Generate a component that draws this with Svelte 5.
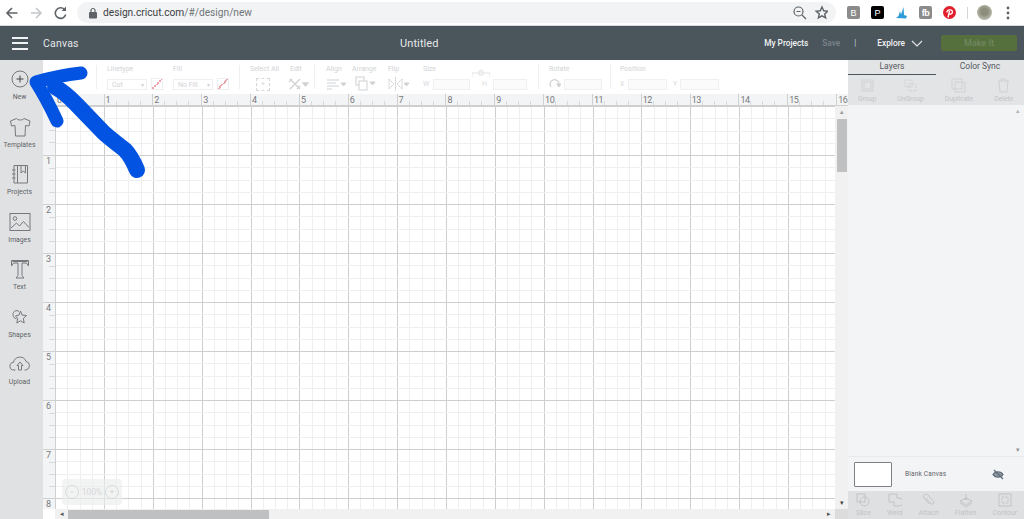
<script>
  const tools = [
    { label: "New", icon: "new" },
    { label: "Templates", icon: "shirt" },
    { label: "Projects", icon: "book" },
    { label: "Images", icon: "image" },
    { label: "Text", icon: "text" },
    { label: "Shapes", icon: "shapes" },
    { label: "Upload", icon: "upload" },
  ];
  const inches = Array.from({ length: 16 }, (_, i) => i + 1);
  const rows = [1, 2, 3, 4, 5, 6, 7, 8];
  const topActions = ["Group", "UnGroup", "Duplicate", "Delete"];
  const bottomActions = ["Slice", "Weld", "Attach", "Flatten", "Contour"];

  // quarter inch lines, every fourth one is the darker inch line
  const gridW = 779;
  const gridH = 403;
  const stepX = 48.85 / 4;
  const stepY = 49 / 4;
  const xLines = Array.from({ length: 64 }, (_, i) => ({
    at: Math.round(i * stepX + 48 - 4 * stepX) + 0.5,
    major: i % 4 === 0,
  }));
  const yLines = Array.from({ length: 33 }, (_, i) => ({
    at: Math.round(i * stepY) + 0.5,
    major: i % 4 === 0,
  }));
  const byDrawOrder = (a, b) => Number(a.major) - Number(b.major);
  xLines.sort(byDrawOrder);
  yLines.sort(byDrawOrder);
</script>

<div class="page">
  <div class="chrome">
    <svg class="nav" width="74" height="24" viewBox="0 0 74 24" fill="none" stroke-width="1.6">
      <path d="M17.500 12H7.500M12 7l-5 5 5 5" stroke="#5f6368" />
      <path d="M31 12h10M36 7l5 5-5 5" stroke="#c4c7c9" />
      <path d="M64.500 8.500a5.300 5.300 0 1 0 1.200 5" stroke="#5f6368" />
      <path d="M66 5.500v4.500h-4.500z" fill="#5f6368" />
    </svg>
    <div class="omnibox">
      <svg width="10" height="12" viewBox="0 0 10 12">
        <rect x="1" y="5" width="8" height="6.500" rx="1" fill="#5f6368" />
        <path d="M3 5V3.500a2 2 0 0 1 4 0V5" fill="none" stroke="#5f6368" stroke-width="1.200" />
      </svg>
      <span class="url"><b>design.cricut.com</b>/#/design/new</span>
      <svg class="omni-icons" width="36" height="16" viewBox="0 0 36 16" fill="none" stroke="#5f6368" stroke-width="1.200">
        <circle cx="6.500" cy="6.500" r="4.500" />
        <path d="M10 10l4 4M4.500 6.500h4" />
        <path d="M30 2l1.700 3.800 4.100.4-3.100 2.700.9 4-3.600-2.100-3.600 2.100.9-4-3.100-2.700 4.100-.4z" stroke-width="1.400" />
      </svg>
    </div>
    <div class="extensions">
      <span class="ext grey">B</span>
      <span class="ext black">P</span>
      <svg width="13" height="13" viewBox="0 0 13 13"><path d="M1 12l2.500-2 1.500-5 1 3.500L8.500 1l.5 8 3 1-1 2.500z" fill="#2e9bd8" /></svg>
      <span class="ext grey small">fb</span>
      <svg class="pin" width="13" height="13" viewBox="0 0 13 13">
        <circle cx="6.500" cy="6.500" r="6.500" fill="#e0202d" />
        <path d="M5 11.500l1.500-6.500M4 6.500C3.500 3.500 9 2.800 9.400 5.500 9.600 8 7 9 6 7.500" fill="none" stroke="#fff" stroke-width="1.300" />
      </svg>
      <span class="divider"></span>
      <span class="avatar"></span>
      <svg class="dots" width="4" height="14" viewBox="0 0 4 14" fill="#5f6368">
        <circle cx="2" cy="2" r="1.400" /><circle cx="2" cy="7" r="1.400" /><circle cx="2" cy="12" r="1.400" />
      </svg>
    </div>
  </div>

  <header class="topbar">
    <div class="burger"><i></i><i></i><i></i></div>
    <span class="section">Canvas</span>
    <span class="title">Untitled</span>
    <div class="top-right">
      <span class="projects">My Projects</span>
      <span class="save">Save</span>
      <span class="sep">|</span>
      <span class="explore">Explore</span>
      <svg width="12" height="7" viewBox="0 0 12 7" fill="none" stroke="#e6e8ea" stroke-width="1.100"><path d="M1 1l5 5 5-5" /></svg>
      <span class="make">Make It</span>
    </div>
  </header>

  <div class="workspace">
    <nav class="sidebar">
      {#each tools as t}
        <div class="tool">
          <svg width="24" height="24" viewBox="0 0 24 24" fill="none" stroke="#75797d" stroke-width="1">
            {#if t.icon === "new"}
              <circle cx="12" cy="12" r="8" />
              <path d="M12 8.500v7M8.500 12h7" stroke="#3f4448" />
            {:else if t.icon === "shirt"}
              <path d="M8.500 3.500L2.500 6l1 5 3.500-.5.500 10.500h9.500l.5-10.500 3.500.5 1-5-6-2.500c-1.500 2-6 2-7.500 0z" />
            {:else if t.icon === "book"}
              <path d="M6 3.500h13.500V21H6zM9.500 3.500V21M13 3.500V11l2.200-2 2.200 2V3.500" />
              <path d="M4 8h3.500M4 12h3.500M4 16h3.500" />
            {:else if t.icon === "image"}
              <rect x="2" y="3.500" width="20" height="17" />
              <circle cx="7" cy="8.500" r="1.800" />
              <path d="M3 18l5.500-5 3 3 4-4.500 5.500 6" />
            {:else if t.icon === "text"}
              <path d="M3.500 3.500h17v5.500l-2-3h-4.500v12.500l2 2.500H8l2-2.500V6H5.500l-2 3z" />
              <path d="M4.500 4.500h15" />
            {:else if t.icon === "shapes"}
              <path d="M11 6.500C8.500 4.500 5 6 5 9.500c0 2.500 1.600 4 3.500 4.300" />
              <path d="M12.500 6l1.500 4 4.500.5-3.200 3 .9 4.500-3.700-2.200-3.700 2.200.9-4.500-2.200-2.500 3.500-1z" />
            {:else}
              <path d="M7.500 18H6a3.800 3.800 0 0 1-.5-7.600 6.500 6.500 0 0 1 12.500-1 4.400 4.400 0 0 1 0 8.600h-1.500" />
              <path d="M9 13.500l3-3.500 3 3.500h-1.500V18h-3v-4.500z" />
            {/if}
          </svg>
          <span>{t.label}</span>
        </div>
      {/each}
    </nav>

    <main class="center">
      <div class="toolbar">
        <div class="group g-line sep-left">
          <span class="cap">Linetype</span>
          <div class="line"><span class="select">Cut<em>▾</em></span><span class="swatch"></span></div>
        </div>
        <div class="group g-fill">
          <span class="cap">Fill</span>
          <div class="line"><span class="select">No Fill<em>▾</em></span><span class="swatch"></span></div>
        </div>
        <div class="group g-select sep-left">
          <span class="cap">Select All</span>
          <div class="line"><span class="dashed">+</span></div>
        </div>
        <div class="group g-edit">
          <span class="cap">Edit</span>
          <div class="line">
            <svg class="shift" width="22" height="14" viewBox="0 0 22 14" fill="none" stroke="#cfd1d3" stroke-width="1.300"><path d="M2 2l10 10M12 2L2 12M1 5l3-3M9 12l3-3" /><path d="M15 6h5l-2.500 3z" fill="#cfd1d3" /></svg>
          </div>
        </div>
        <div class="group g-align sep-left">
          <span class="cap">Align</span>
          <div class="line"><svg width="22" height="14" viewBox="0 0 22 14" fill="none" stroke="#cfd1d3"><path d="M1 3h12M1 6h9M1 9h12M1 12h5" /><path d="M15 6h5l-2.500 3z" fill="#cfd1d3" /></svg></div>
        </div>
        <div class="group g-arrange">
          <span class="cap">Arrange</span>
          <div class="line"><svg class="shift-r" width="22" height="16" viewBox="0 0 22 16" fill="none" stroke="#cfd1d3"><rect x="1" y="1" width="8" height="8" /><rect x="4" y="5" width="8" height="9" fill="#fff" /><path d="M15 6h5l-2.500 3z" fill="#cfd1d3" /></svg></div>
        </div>
        <div class="group g-flip">
          <span class="cap">Flip</span>
          <div class="line"><svg width="22" height="14" viewBox="0 0 22 14" fill="none" stroke="#cfd1d3"><path d="M1 2l5 5-5 5zM14 2L9 7l5 5zM7.500 0v14" stroke-dasharray="2 0.500" /><path d="M16 6h5l-2.500 3z" fill="#cfd1d3" /></svg></div>
        </div>
        <div class="group g-size">
          <span class="cap">Size</span>
          <div class="line">
            <span class="axis">W</span><span class="spin s-w"></span>
            <svg class="lock" width="18" height="10" viewBox="0 0 18 10" fill="none" stroke="#e2e3e5"><path d="M0 9V5h18v4M7 3h4v4H7zM8 3a1 1 0 0 1 2 0" /></svg>
            <span class="axis s-h">H</span><span class="spin s-h2"></span>
          </div>
        </div>
        <div class="group g-rotate sep-left">
          <span class="cap">Rotate</span>
          <div class="line">
            <svg width="12" height="14" viewBox="0 0 12 14" fill="none" stroke="#cfd1d3" stroke-width="1.200"><path d="M2 10a4.500 4.500 0 1 1 8-3" /><path d="M8 7h4l-2 2.500z" fill="#cfd1d3" /></svg>
            <span class="spin s-r"></span>
          </div>
        </div>
        <div class="group g-pos sep-left">
          <span class="cap">Position</span>
          <div class="line">
            <span class="axis s-x">X</span><span class="spin s-p"></span>
            <span class="axis s-y">Y</span><span class="spin s-p2"></span>
          </div>
        </div>
      </div>

      <div class="stage">
        <div class="ruler-top">
          <span class="corner">0</span>
          {#each inches as n}
            <span class="inch">{n}</span>
          {/each}
        </div>
        <div class="stage-body">
          <div class="ruler-left">
            <span class="vinch first"></span>
            {#each rows as n}
              <span class="vinch">{n}</span>
            {/each}
          </div>
          <svg class="grid" width={gridW} height={gridH} viewBox="0 0 {gridW} {gridH}" shape-rendering="crispEdges">
            {#each xLines as l}
              <line x1={l.at} x2={l.at} y1="0" y2={gridH} stroke={l.major ? "#cdced0" : "#eeeff0"} />
            {/each}
            {#each yLines as l}
              <line y1={l.at} y2={l.at} x1="0" x2={gridW} stroke={l.major ? "#cdced0" : "#eeeff0"} />
            {/each}
          </svg>
          <div class="vscroll">
            <span class="arrow">▴</span>
            <span class="vthumb"></span>
            <span class="arrow end">▾</span>
          </div>
        </div>
        <div class="hscroll">
          <span class="harrow">◂</span>
          <span class="hthumb"></span>
          <span class="harrow end">▸</span>
          <span class="hcorner"></span>
        </div>
        <div class="zoom">
          <span class="round">−</span>
          <span class="pct">100%</span>
          <span class="round">+</span>
        </div>
      </div>
    </main>

    <aside class="panel">
      <div class="tabs">
        <span class="tab active">Layers</span>
        <span class="tab">Color Sync</span>
      </div>
      <div class="actions">
        {#each topActions as a, i}
          <div class="action">
            <svg width="15" height="15" viewBox="0 0 15 15" fill="none" stroke="#cfd1d3">
              {#if i === 0}
                <rect x="2" y="2" width="11" height="11" /><rect x="4" y="4" width="7" height="7" />
              {:else if i === 1}
                <path d="M2 2h7v7H2zM6 6h7v7H6z" stroke-dasharray="2 1" />
              {:else if i === 2}
                <rect x="1" y="1" width="10" height="10" /><rect x="4" y="4" width="10" height="10" />
              {:else}
                <path d="M2 3h11M5 3V1h5v2M3 3l1 11h7l1-11" />
              {/if}
            </svg>
            <span>{a}</span>
          </div>
        {/each}
      </div>
      <div class="layers">
        <span class="arrow">▴</span>
        <span class="arrow end">▾</span>
      </div>
      <div class="blank">
        <span class="thumb"></span>
        <span class="blank-label">Blank Canvas</span>
        <svg width="12" height="11" viewBox="0 0 12 11" fill="none" stroke="#5f6b78" stroke-width="1.200">
          <path d="M1 5.500C3 2 9 2 11 5.500 9 9 3 9 1 5.500z" fill="#8f98a1" /><path d="M2 1l9 9" />
        </svg>
      </div>
      <div class="actions bottom">
        {#each bottomActions as a, i}
          <div class="action">
            <svg width="14" height="14" viewBox="0 0 14 14" fill="none" stroke="#c2c4c6">
              {#if i === 0}
                <rect x="1" y="1" width="8" height="8" /><circle cx="8.500" cy="8.500" r="4.500" />
              {:else if i === 1}
                <path d="M1 1h8v4h2a3 3 0 0 1 0 8H6V9H1z" />
              {:else if i === 2}
                <path d="M4 5l5 6a2 2 0 0 0 3-2L6 2a2.500 2.500 0 0 0-4 3l5 6" />
              {:else if i === 3}
                <path d="M7 1v6M5 5l2 2 2-2M1 8l6-3 6 3-6 4zM1 10l6 4 6-4" />
              {:else}
                <rect x="1" y="1" width="12" height="12" /><path d="M4 4h6v6H4z" stroke-dasharray="2 1" />
              {/if}
            </svg>
            <span>{a}</span>
          </div>
        {/each}
      </div>
    </aside>
  </div>

  <svg class="scribble" width="160" height="190" viewBox="0 0 160 190" fill="none" stroke="#0353e3" stroke-linecap="round" stroke-linejoin="round">
    <path d="M81 73C64 75 50 78 36 82C43 93 50 106 57 121" stroke-width="13" />
    <path d="M55 87C66 93 72 100 77 105L104 133C112 140 120 146 125 150C130 155 134 163 137 170" stroke-width="16" />
  </svg>
</div>

<style>
  :global(body) {
    margin: 0;
    background: #fff;
  }
  .page {
    position: relative;
    width: 1024px;
    height: 519px;
    overflow: hidden;
    font-family: Roboto, "Liberation Sans", sans-serif;
  }
  .chrome {
    height: 25px;
    display: flex;
    align-items: center;
    background: #fff;
    border-bottom: 1px solid #d8d9da;
  }
  .nav {
    flex: none;
  }
  .omnibox {
    width: 759px;
    height: 21px;
    margin-left: 3px;
    padding: 0 8px 0 11px;
    box-sizing: border-box;
    display: flex;
    align-items: center;
    gap: 5px;
    background: #f1f3f4;
    border-radius: 11px;
  }
  .url {
    font-size: 10.200px;
    color: #70757a;
  }
  .url b {
    font-weight: 400;
    color: #3c4043;
  }
  .omni-icons {
    margin-left: auto;
  }
  .extensions {
    flex: 1;
    display: flex;
    align-items: center;
    gap: 11px;
    padding-left: 11px;
  }
  .ext {
    width: 13px;
    height: 13px;
    border-radius: 2px;
    display: flex;
    align-items: center;
    justify-content: center;
    font-size: 9px;
    color: #fff;
    font-family: "Liberation Sans", sans-serif;
  }
  .ext.grey {
    background: #8b8b8b;
  }
  .ext.black {
    background: #000;
  }
  .ext.small {
    font-weight: 700;
    letter-spacing: -0.5px;
  }
  .divider {
    width: 1px;
    height: 12px;
    background: #d5d6d7;
  }
  .avatar {
    width: 15px;
    height: 15px;
    margin-left: -2px;
    border-radius: 50%;
    background: radial-gradient(circle at 50% 45%, #8d8d7c 0 30%, #b4b4a6 65%, #c9c9c0);
  }
  .dots {
    margin-left: 3px;
  }
  .topbar {
    height: 34px;
    position: relative;
    display: flex;
    align-items: center;
    background: #4b555c;
    color: #e6e8ea;
  }
  .burger {
    width: 16px;
    margin-left: 12px;
    display: flex;
    flex-direction: column;
    gap: 3.500px;
  }
  .burger i {
    height: 2px;
    background: #f1f2f3;
  }
  .section {
    margin-left: 15px;
    font-size: 10.500px;
    letter-spacing: 0.2px;
  }
  .title {
    position: absolute;
    left: 400px;
    font-size: 11px;
    letter-spacing: 0.1px;
  }
  .top-right {
    margin-left: auto;
    display: flex;
    align-items: center;
    font-size: 8.300px;
    font-weight: 500;
    padding-right: 7px;
  }
  .projects {
    color: #f2f3f4;
  }
  .save {
    margin-left: 14px;
    color: #7b858c;
  }
  .sep {
    margin-left: 14px;
    color: #b8c4d4;
  }
  .explore {
    margin-left: 21px;
    color: #f2f3f4;
  }
  .top-right svg {
    margin-left: 6px;
  }
  .make {
    margin-left: 18px;
    width: 76px;
    height: 16px;
    line-height: 16px;
    text-align: center;
    background: #556f3d;
    color: #71875f;
    font-size: 9px;
    border-radius: 2px;
  }
  .workspace {
    height: 459px;
    display: flex;
  }
  .sidebar {
    width: 43px;
    flex: none;
    background: #e0e1e3;
    padding: 7px 4px 0 0;
    box-sizing: border-box;
    display: flex;
    flex-direction: column;
    gap: 11.500px;
  }
  .tool {
    height: 36px;
    display: flex;
    flex-direction: column;
    align-items: center;
    gap: 2px;
    font-size: 6.800px;
    color: #5d6266;
  }
  .center {
    flex: 1;
    min-width: 0;
    display: flex;
    flex-direction: column;
  }
  .toolbar {
    height: 34px;
    padding-left: 53px;
    display: flex;
    align-items: flex-start;
    background: #fff;
    font-size: 7px;
    color: #d1d3d5;
    box-sizing: border-box;
    flex: none;
  }
  .group {
    margin-top: 5px;
    height: 24px;
    flex: none;
    box-sizing: border-box;
  }
  .sep-left {
    border-left: 1px solid #eeeff0;
    padding-left: 10px;
  }
  .cap {
    display: block;
    height: 9px;
    line-height: 9px;
  }
  .line {
    display: flex;
    align-items: center;
    margin-top: 3px;
    height: 14px;
    position: relative;
  }
  .g-line {
    width: 77px;
  }
  .g-fill {
    width: 66px;
  }
  .g-select {
    width: 51px;
  }
  .g-edit {
    width: 24px;
  }
  .g-align {
    width: 38px;
    padding-left: 11px;
  }
  .g-arrange {
    width: 36px;
  }
  .g-flip {
    width: 35px;
  }
  .g-size {
    width: 115px;
  }
  .g-rotate {
    width: 72px;
  }
  .g-pos {
    width: 120px;
    padding-left: 9px;
  }
  .shift {
    margin-left: -2px;
  }
  .shift-r {
    margin-left: 3px;
  }
  .select {
    width: 40px;
    height: 11px;
    padding-left: 4px;
    box-sizing: border-box;
    line-height: 10px;
    border: 1px solid #eeeff0;
    display: flex;
    justify-content: space-between;
    white-space: nowrap;
    overflow: hidden;
  }
  .select em {
    font-style: normal;
    font-size: 6px;
    padding-right: 2px;
  }
  .swatch {
    width: 12px;
    height: 12px;
    margin-left: 4px;
    background: linear-gradient(135deg, transparent 45%, #eda3a8 45%, #eda3a8 55%, transparent 55%);
    border: 1px solid #eeeff0;
    box-sizing: border-box;
  }
  .dashed {
    width: 12px;
    height: 11px;
    border: 1px dashed #d5d6d8;
    text-align: center;
    line-height: 10px;
    margin-left: 6px;
  }
  .axis {
    width: 10px;
    color: #d8d9db;
  }
  .spin {
    height: 11px;
    border: 1px solid #f0f0f1;
    box-sizing: border-box;
    background: #fbfbfb;
  }
  .s-w {
    width: 37px;
  }
  .s-h {
    margin-left: 12px;
    width: 11px;
  }
  .s-h2 {
    width: 34px;
  }
  .s-r {
    margin-left: 3px;
    width: 38px;
  }
  .s-x {
    width: 8px;
  }
  .s-p {
    width: 39px;
  }
  .s-y {
    margin-left: 6px;
    width: 7px;
  }
  .s-p2 {
    width: 39px;
  }
  .lock {
    position: absolute;
    left: 49px;
    top: -9px;
  }
  .stage {
    flex: 1;
    position: relative;
    display: flex;
    flex-direction: column;
    min-height: 0;
  }
  .ruler-top {
    height: 12px;
    flex: none;
    display: flex;
    overflow: hidden;
    background: #f3f4f5;
    font-size: 9px;
    line-height: 12px;
    color: #77797c;
    box-sizing: border-box;
    border-bottom: 1px solid #cfd0d2;
  }
  .corner {
    padding-left: 14px;
    flex: none;
    box-sizing: border-box;
    width: 60.500px;
  }
  .inch {
    width: 48.850px;
    flex: none;
    box-sizing: border-box;
    padding-left: 2px;
    letter-spacing: -0.5px;
    background:
      linear-gradient(#cfd0d2, #cfd0d2) 0 0 / 1px 100% no-repeat,
      linear-gradient(#d8d9db, #d8d9db) 12px 100% / 1px 4px no-repeat,
      linear-gradient(#d8d9db, #d8d9db) 24px 100% / 1px 4px no-repeat,
      linear-gradient(#d8d9db, #d8d9db) 36px 100% / 1px 4px no-repeat;
  }
  .inch:last-child {
    background: linear-gradient(#cfd0d2, #cfd0d2) 0 0 / 1px 100% no-repeat;
  }
  .stage-body {
    flex: 1;
    min-height: 0;
    display: flex;
    overflow: hidden;
  }
  .ruler-left {
    width: 12px;
    height: 403px;
    flex: none;
    background: #f3f4f5;
    font-size: 9px;
    color: #77797c;
    overflow: hidden;
    border-right: 1px solid #cfd0d2;
    box-sizing: content-box;
  }
  .vinch {
    display: block;
    height: 49px;
    box-sizing: border-box;
    padding: 1px 0 0 3px;
    line-height: 9px;
    border-top: 1px solid #cfd0d2;
    background:
      linear-gradient(#d8d9db, #d8d9db) 100% 12px / 6px 1px no-repeat,
      linear-gradient(#d8d9db, #d8d9db) 100% 24px / 6px 1px no-repeat,
      linear-gradient(#d8d9db, #d8d9db) 100% 36px / 6px 1px no-repeat;
  }
  .vinch.first {
    border-top: none;
  }
  .vinch:last-child {
    height: 11px;
  }
  .grid {
    flex: none;
    display: block;
    background: #fff;
  }
  .vscroll {
    width: 13px;
    flex: none;
    background: #f1f1f1;
    display: flex;
    flex-direction: column;
    align-items: center;
  }
  .arrow {
    font-size: 7px;
    line-height: 12px;
    height: 12px;
    color: #9c9d9f;
  }
  .arrow.end {
    margin-top: auto;
    color: #444;
  }
  .vthumb {
    width: 10px;
    height: 53px;
    background: #bfc0c1;
    margin-top: 1px;
  }
  .hscroll {
    height: 10px;
    flex: none;
    display: flex;
    align-items: center;
    background: #f1f1f1;
    margin-left: 12px;
  }
  .harrow {
    width: 13px;
    text-align: center;
    font-size: 7px;
    color: #555;
  }
  .harrow.end {
    margin-left: auto;
  }
  .hcorner {
    width: 13px;
    height: 100%;
    background: #dcdcdc;
  }
  .hthumb {
    width: 201px;
    height: 9px;
    background: #bfc0c1;
  }
  .zoom {
    position: absolute;
    left: 19px;
    bottom: 14px;
    width: 60px;
    height: 26px;
    border-radius: 3px;
    background: rgba(235, 236, 237, 0.65);
    display: flex;
    align-items: center;
    justify-content: space-between;
    padding: 0 3px;
    box-sizing: border-box;
    font-size: 8.500px;
    color: #d6d7d9;
  }
  .round {
    width: 14px;
    height: 14px;
    border: 1px solid #dadbdc;
    border-radius: 50%;
    text-align: center;
    line-height: 12px;
    box-sizing: border-box;
  }
  .panel {
    width: 176px;
    flex: none;
    display: flex;
    flex-direction: column;
    background: #f3f4f6;
    font-size: 7.500px;
  }
  .tabs {
    height: 15px;
    flex: none;
    display: flex;
    background: #e3e4e6;
    font-size: 8.500px;
    color: #55595d;
  }
  .tab {
    flex: 1;
    text-align: center;
    line-height: 13px;
    box-sizing: border-box;
  }
  .tab.active {
    border-bottom: 1.500px solid #4b555c;
  }
  .actions {
    height: 30px;
    flex: none;
    display: flex;
    gap: 21px;
    background: #e3e4e6;
    color: #c2c4c6;
    font-size: 6.800px;
    padding: 3px 0 0 10px;
    box-sizing: border-box;
  }
  .action {
    display: flex;
    flex-direction: column;
    align-items: center;
    gap: 2px;
  }
  .layers {
    flex: 1;
    min-height: 0;
    display: flex;
    flex-direction: column;
    align-items: flex-end;
    padding-right: 2px;
    border-bottom: 1px solid #e8e9ea;
  }
  .layers .arrow {
    width: 9px;
    text-align: center;
    color: #b5b6b8;
  }
  .layers .arrow.end {
    color: #909193;
  }
  .blank {
    height: 34px;
    display: flex;
    align-items: center;
    padding-left: 6px;
    color: #5f6367;
    flex: none;
  }
  .thumb {
    width: 36px;
    height: 23px;
    background: #fff;
    border: 1px solid #7d8186;
    border-radius: 1px;
    flex: none;
  }
  .blank-label {
    margin-left: 13px;
    font-size: 6.500px;
    letter-spacing: 0.2px;
  }
  .blank svg {
    margin-left: auto;
    margin-right: 20px;
  }
  .actions.bottom {
    height: 28px;
    gap: 16px;
    font-size: 7px;
    background: #dfe0e2;
    padding: 2px 0 0 8px;
  }
  .scribble {
    position: absolute;
    left: 0;
    top: 0;
    pointer-events: none;
  }
</style>
